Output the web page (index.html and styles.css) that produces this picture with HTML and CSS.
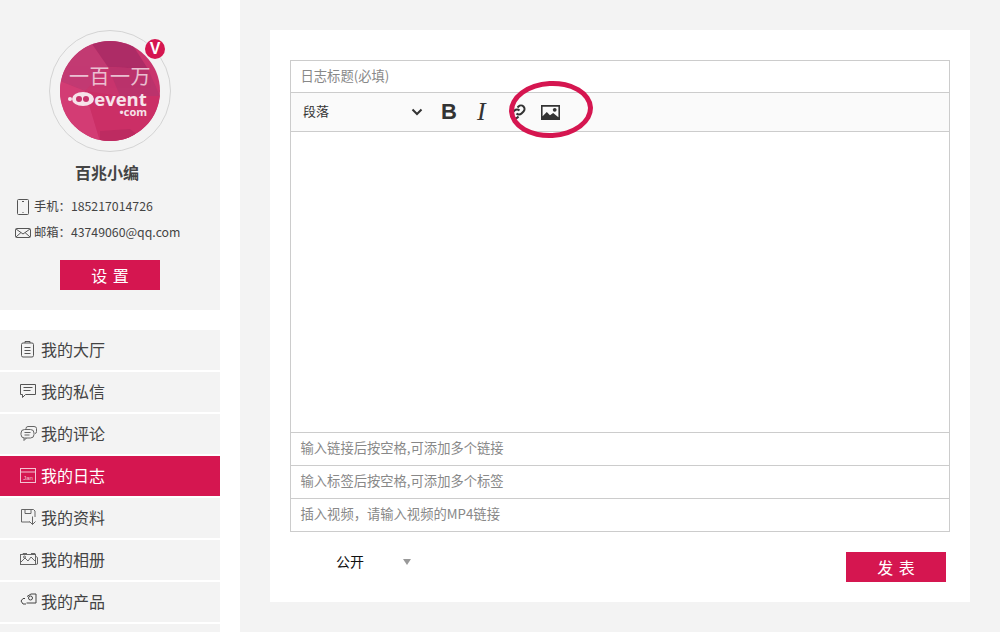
FILE: index.html
```html
<!DOCTYPE html>
<html lang="zh-CN">
<head>
  <meta charset="UTF-8">
  <title>我的日志</title>
  <link rel="stylesheet" href="styles.css">
</head>
<body>
  <div class="page">
    <aside class="sidebar">
      <section class="profile">
        <div class="avatar-ring">
          <div class="avatar">
            <svg class="avatar-bg" viewBox="0 0 100 100" width="100" height="100">
              <rect width="100" height="100" fill="#c9356d"/>
              <polygon points="0,0 30,0 48,26 25,50 0,40" fill="#c23a72"/>
              <polygon points="30,0 70,0 88,28 48,26" fill="#ad2c66"/>
              <polygon points="48,26 88,28 100,55 60,55" fill="#bb336c"/>
              <polygon points="0,40 25,50 40,100 0,100" fill="#d33c74"/>
              <polygon points="25,50 60,55 100,55 100,100 40,100" fill="#cb2f66"/>
              <polygon points="40,90 70,88 85,100 40,100" fill="#bd2b61"/>
            </svg>
            <span class="logo-cn">一百一万</span>
            <div class="logo-row">
              <svg class="logo-mark" viewBox="0 0 26 14" width="26" height="14">
                <ellipse cx="15" cy="7" rx="11" ry="7" fill="#f6e3ea"/>
                <circle cx="2" cy="7" r="2" fill="#f6e3ea"/>
                <circle cx="11" cy="7" r="3" fill="#c8336c"/>
                <circle cx="18" cy="7" r="3" fill="#c8336c"/>
              </svg>
              <span class="logo-event">event</span>
            </div>
            <span class="logo-com">•com</span>
          </div>
          <span class="badge">V</span>
        </div>
        <h2 class="name">百兆小编</h2>
        <p class="contact">
          <svg class="contact-icon" viewBox="0 0 16 18" width="16" height="18" fill="none" stroke="#555" stroke-width="1">
            <rect x="2.500" y="1.500" width="11" height="15" rx="1"/>
            <path d="M7 3.500h2M7.500 14.500h1"/>
          </svg>
          手机：185217014726
        </p>
        <p class="contact">
          <svg class="contact-icon" viewBox="0 0 16 12" width="16" height="12" fill="none" stroke="#555" stroke-width="1">
            <rect x="0.500" y="1.500" width="15" height="9" rx="1"/>
            <path d="M1 2l7 5 7-5M1 10l5-4.500M15 10l-5-4.500"/>
          </svg>
          邮箱：43749060@qq.com
        </p>
        <button class="btn">设 置</button>
      </section>
      <nav class="menu">
        <a class="menu-item">
          <svg class="menu-icon" viewBox="0 0 18 18" fill="none" stroke="#555"><rect x="1.500" y="3" width="12" height="14" rx="1.500"/><path d="M5 3V1.500h5V3M4.500 7.500h6M4.500 10.500h6M4.500 13.500h6"/></svg>
          我的大厅
        </a>
        <a class="menu-item">
          <svg class="menu-icon" viewBox="0 0 18 18" fill="none" stroke="#555"><path d="M0.500 2.500h15v10h-10l-3 3v-3h-2z"/><path d="M3.500 5.500h9M3.500 8.500h7"/></svg>
          我的私信
        </a>
        <a class="menu-item">
          <svg class="menu-icon" viewBox="0 0 18 18" fill="none" stroke="#666"><path d="M6 5V4.500q0-2 2-2h6q2.500 0 2.500 2v3q0 2-1.500 2"/><rect x="1" y="5.500" width="13" height="8.500" rx="3.500"/><path d="M4 14v2.500l2.500-2.500M4.500 8.500h6M4.500 11h5"/></svg>
          我的评论
        </a>
        <a class="menu-item active">
          <svg class="menu-icon" viewBox="0 0 18 18" fill="none" stroke="#f3c3d3"><rect x="0.500" y="2.500" width="15" height="14"/><path d="M0.500 6h15"/><text class="menu-icon-text" x="8" y="13.500" text-anchor="middle">Jan</text></svg>
          我的日志
        </a>
        <a class="menu-item">
          <svg class="menu-icon" viewBox="0 0 18 18" fill="none" stroke="#666"><path d="M10 14H1.500V1.500h12l1.500 1.500v6"/><path d="M5 1.500v4h6v-4M12.500 8.500v8M9.500 13.500l3 3 3-3"/></svg>
          我的资料
        </a>
        <a class="menu-item">
          <svg class="menu-icon" viewBox="0 0 18 18" fill="none" stroke="#666"><path d="M3 5V3.500h4M11 3.500h4V5"/><rect x="0.500" y="4.500" width="15" height="10"/><path d="M1 12l4-4 3 3 3-4 4 4M16 6.500l1.500 1v6.500l-2 .5"/><circle cx="4.500" cy="7" r="1"/></svg>
          我的相册
        </a>
        <a class="menu-item">
          <svg class="menu-icon" viewBox="0 0 18 18" fill="none" stroke="#444"><path d="M7 4.500l4-2.500h5v9H6.500"/><path d="M5 6.500H3L1 9l2 3h3"/><circle cx="10.500" cy="6" r="2"/></svg>
          我的产品
        </a>
        <a class="menu-item menu-item-cut"></a>
      </nav>
    </aside>

    <main class="main">
      <div class="panel">
        <div class="editor">
          <div class="field">日志标题(必填)</div>
          <div class="toolbar">
            <span class="format-select">段落</span>
            <svg class="chevron" viewBox="0 0 12 8" width="12" height="8" fill="none" stroke="#333" stroke-width="2"><path d="M1.500 1.500L6 6l4.500-4.500"/></svg>
            <span class="tool-bold">B</span>
            <span class="tool-italic">I</span>
            <svg class="tool-icon link-icon" viewBox="0 0 18 18" width="18" height="18" fill="none" stroke="#333" stroke-width="2">
              <path d="M7.500 10.500a3.500 3.500 0 0 0 5 0l2-2a3.500 3.500 0 0 0-5-5l-1 1"/>
              <path d="M10.500 7.500a3.500 3.500 0 0 0-5 0l-2 2a3.500 3.500 0 0 0 5 5l1-1"/>
            </svg>
            <svg class="tool-icon image-icon" viewBox="0 0 18 14" width="19" height="15">
              <path fill="#333" fill-rule="evenodd" d="M0 0h18v14H0zM1.500 1.500v9l4-4 3 3 3-2 5 4v-10z"/>
              <circle cx="13" cy="4.500" r="1.800" fill="#333"/>
            </svg>
            <span class="annotation"></span>
          </div>
          <div class="editor-body"></div>
          <div class="field field-sm">输入链接后按空格,可添加多个链接</div>
          <div class="field field-sm">输入标签后按空格,可添加多个标签</div>
          <div class="field field-sm">插入视频，请输入视频的MP4链接</div>
        </div>
        <div class="form-foot">
          <div class="privacy">
            <span class="privacy-label">公开</span>
            <i class="caret"></i>
          </div>
          <button class="btn btn-publish">发 表</button>
        </div>
      </div>
    </main>
  </div>
</body>
</html>
```

FILE: styles.css
```css
* {
  box-sizing: border-box;
}
html, body {
  margin: 0;
  height: 632px;
  overflow: hidden;
}
body {
  font-family: "Noto Sans CJK SC", "Noto Sans", sans-serif;
  color: #444;
  background: #fff;
}
.page {
  display: flex;
  height: 632px;
}

/* sidebar */
.sidebar {
  width: 220px;
  margin-right: 20px;
  flex-shrink: 0;
  height: 632px;
  overflow: hidden;
}
.profile {
  height: 310px;
  background: #f3f3f3;
  padding-top: 30px;
  display: flex;
  flex-direction: column;
}
.avatar-ring {
  position: relative;
  width: 122px;
  height: 122px;
  margin-left: 49px;
  border: 1px solid #d4d4d4;
  border-radius: 50%;
  padding: 10px;
}
.avatar {
  position: relative;
  width: 100px;
  height: 100px;
  border-radius: 50%;
  overflow: hidden;
  color: #f6e3ea;
  display: flex;
  flex-direction: column;
  align-items: center;
}
.avatar-bg {
  position: absolute;
  left: 0;
  top: 0;
}
.logo-cn {
  position: relative;
  margin-top: 24px;
  font-family: "Liberation Serif", "Noto Sans CJK SC", serif;
  font-size: 20px;
  line-height: 24px;
  white-space: nowrap;
  letter-spacing: .5px;
  opacity: .8;
}
.logo-row {
  position: relative;
  display: flex;
  align-items: center;
  height: 18px;
  margin: 1px 5px 0 0;
}
.logo-event {
  font-family: "Open Sans", sans-serif;
  font-weight: 700;
  font-size: 18.500px;
  line-height: 18px;
}
.logo-com {
  position: relative;
  align-self: flex-end;
  margin: -2px 13px 0 0;
  font-family: "Open Sans", sans-serif;
  font-weight: 700;
  font-size: 11px;
  line-height: 11px;
}
.badge {
  position: absolute;
  left: 95px;
  top: 8px;
  width: 20px;
  height: 20px;
  border-radius: 50%;
  background: #d51650;
  color: #fff;
  font: 700 16px/20px "Liberation Sans", sans-serif;
  text-align: center;
}
.name {
  margin: 8px 0 0;
  font-size: 16px;
  line-height: 24px;
  font-weight: 700;
  text-align: center;
  padding-right: 6px;
  color: #444;
}
.contact {
  position: relative;
  margin: 14px 0 0;
  padding-left: 34px;
  font-family: "Noto Sans CJK TC", "Noto Sans CJK SC", sans-serif;
  font-size: 12.300px;
  line-height: 17px;
  color: #444;
  white-space: nowrap;
}
.contact + .contact {
  margin-top: 9px;
}
.contact-icon {
  position: absolute;
  left: 15px;
  top: 50%;
  transform: translateY(-50%);
}
.btn {
  display: block;
  width: 100px;
  height: 30px;
  padding: 0;
  border: none;
  background: #d51650;
  color: #fff;
  font-family: inherit;
  font-size: 16px;
  word-spacing: 2px;
  cursor: pointer;
}
.profile .btn {
  margin: 19px 0 0 60px;
}

/* menu */
.menu {
  margin-top: 20px;
  display: flex;
  flex-direction: column;
  gap: 2px;
}
.menu-item {
  display: flex;
  align-items: center;
  flex-shrink: 0;
  gap: 3px;
  height: 40px;
  padding: 0 0 2px 20px;
  background: #f3f3f3;
  font-size: 16px;
  color: #444;
}
.menu-item.active {
  background: #d51650;
  color: #fff;
}
.menu-item-cut {
  height: 8px;
}
.menu-icon {
  width: 18px;
  height: 18px;
  margin-top: -1px;
  flex-shrink: 0;
}
.menu-icon-text {
  font: 6px "Liberation Sans", sans-serif;
  fill: #f3c3d3;
  stroke: none;
}

/* main */
.main {
  flex: 1;
  background: #f3f3f3;
  padding: 30px;
}
.panel {
  width: 700px;
  height: 572px;
  background: #fff;
  padding: 30px 20px 0;
}
.editor {
  width: 660px;
  border: 1px solid #ccc;
}
.field {
  height: 31px;
  padding-left: 9.500px;
  font-size: 13.300px;
  line-height: 30px;
  color: #888;
}
.field-sm {
  height: 33px;
  line-height: 29px;
  border-top: 1px solid #ccc;
}
.toolbar {
  position: relative;
  display: flex;
  align-items: center;
  height: 40px;
  padding-left: 12px;
  background: #fafafa;
  border-top: 1px solid #ccc;
  border-bottom: 1px solid #ccc;
  color: #333;
}
.format-select {
  width: 108px;
  margin-top: -3px;
  font-size: 13px;
}
.chevron {
  margin: -1px 18px 0 0;
}
.tool-bold {
  width: 36px;
  font: 700 22px/1 "Liberation Sans", sans-serif;
}
.tool-italic {
  width: 32px;
  font: italic 26px/1 "Liberation Serif", serif;
}
.tool-icon {
  flex-shrink: 0;
}
.link-icon {
  margin-right: 14px;
}
.annotation {
  position: absolute;
  left: 218px;
  top: -12px;
  width: 84px;
  height: 57px;
  border: 5px solid #d51650;
  border-radius: 50%;
  transform: rotate(-3deg);
}
.editor-body {
  height: 300px;
}

/* footer of the form */
.form-foot {
  display: flex;
  justify-content: space-between;
  align-items: flex-start;
  padding: 20px 4px 0 46px;
}
.privacy {
  display: flex;
  align-items: center;
  gap: 39px;
  height: 20px;
  font-size: 14px;
  color: #111;
}
.privacy-label {
  margin-top: -2px;
}
.caret {
  width: 0;
  height: 0;
  border-left: 4px solid transparent;
  border-right: 4px solid transparent;
  border-top: 6px solid #999;
}
.btn-publish {
  width: 100px;
}
```
